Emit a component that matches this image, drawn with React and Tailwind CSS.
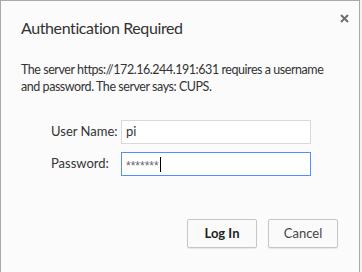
import React from 'react';

const font = { fontFamily: '"Segoe UI", Lato, "Liberation Sans", sans-serif' };

const Field = ({ label, value, focused }) => (
  <div className="flex items-center">
    <label className="w-[70px] whitespace-nowrap text-[13px] text-[#333]">{label}</label>
    <div
      className={`flex items-center w-[190px] h-[24px] px-[4px] bg-white border text-[13px] ${
        focused ? 'border-[#4d90fe] text-[#666]' : 'border-[#d9d9d9] text-[#333]'
      }`}
    >
      {focused ? <span className="text-[12px] pt-[3px]" style={{ fontFamily: '"Liberation Sans", sans-serif' }}>{value}</span> : value}
      {focused && <span className="w-px h-[15px] bg-black ml-[1px]" />}
    </div>
  </div>
);

const Button = ({ children, bold }) => (
  <button
    className={`w-[70px] h-[29px] bg-[#fafafa] border border-[#c6c6c6] rounded-[2px] shadow-[0_1px_1px_rgba(0,0,0,0.08)] text-[13px] ${
      bold ? 'font-bold text-[#222]' : 'text-[#444]'
    }`}
  >
    {children}
  </button>
);

export default function App() {
  return (
    <div className="w-[362px] h-[272px] bg-[#f2f2f2] overflow-hidden" style={font}>
      <div className="relative w-[360px] h-[280px] bg-[#fbfbfb] border-l border-t border-r border-[#a9a9a9]">
        <button className="absolute right-[8px] top-[10px] w-[14px] h-[14px] flex items-center justify-center">
          <svg width="9" height="9" viewBox="0 0 9 9">
            <path d="M1 1 L8 8 M8 1 L1 8" stroke="#6f6f6f" strokeWidth="2" />
          </svg>
        </button>
        <div className="pl-[20px] pr-[21px] pt-[16px]">
          <h1 className="text-[16px] tracking-[-0.4px] leading-[22px] text-[#333]">Authentication Required</h1>
          <p className="mt-[22px] text-[12.5px] tracking-[-0.45px] leading-[17px] text-[#333]">
            The server https://172.16.244.191:631 requires a username and password. The server says: CUPS.
          </p>
          <div className="mt-[25px] pl-[30px] flex flex-col gap-[8px]">
            <Field label="User Name:" value="pi" />
            <Field label="Password:" value="*******" focused />
          </div>
          <div className="mt-[43px] flex justify-end gap-[11px]">
            <Button bold>Log In</Button>
            <Button>Cancel</Button>
          </div>
        </div>
      </div>
    </div>
  );
}
